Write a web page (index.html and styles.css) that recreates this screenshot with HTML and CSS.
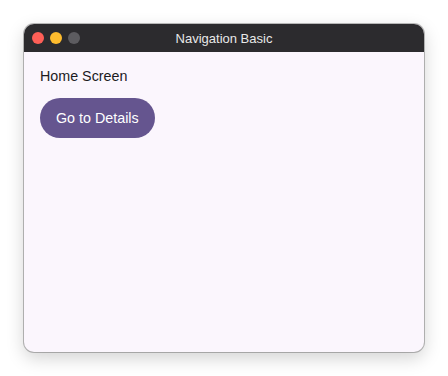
FILE: index.html
```html
<!DOCTYPE html>
<html lang="en">
<head>
  <meta charset="UTF-8">
  <title>Navigation Basic</title>
  <link rel="stylesheet" href="styles.css">
</head>
<body>
  <div class="window">
    <div class="titlebar">
      <div class="lights">
        <span class="light red"></span>
        <span class="light yellow"></span>
        <span class="light gray"></span>
      </div>
      <div class="title">Navigation Basic</div>
    </div>
    <div class="content">
      <p class="screen-title">Home Screen</p>
      <button class="nav-btn">Go to Details</button>
    </div>
  </div>
</body>
</html>
```

FILE: styles.css
```css
body {
  margin: 0;
  background-color: #fff;
  font-family: 'Liberation Sans', Arial, sans-serif;
  padding: 24px;
}

.window {
  width: 400px;
  height: 328px;
  border-radius: 10px;
  overflow: hidden;
  background-color: #fbf6fd;
  box-shadow: 0 0 0 1px rgba(0, 0, 0, 0.25), 0 6px 18px rgba(0, 0, 0, 0.18);
  display: flex;
  flex-direction: column;
}

.titlebar {
  height: 28px;
  background-color: #2c2b2e;
  position: relative;
  display: flex;
  align-items: center;
  justify-content: center;
  flex-shrink: 0;
}

.lights {
  position: absolute;
  left: 8px;
  top: 8px;
  display: flex;
  gap: 6px;
}

.light {
  width: 12px;
  height: 12px;
  border-radius: 50%;
}

.red { background-color: #fe5f57; }
.yellow { background-color: #febc2e; }
.gray { background-color: #5d5c60; }

.title {
  color: #e8e8e8;
  font-size: 13px;
}

.content {
  padding: 14px 16px;
}

.screen-title {
  margin: 0 0 12px;
  font-size: 14.3px;
  color: #1c1b1f;
  line-height: 20px;
}

.nav-btn {
  height: 40px;
  padding: 0 16px;
  border: none;
  border-radius: 20px;
  background-color: #65558f;
  color: #fff;
  font-family: inherit;
  font-size: 14.3px;
}
```
